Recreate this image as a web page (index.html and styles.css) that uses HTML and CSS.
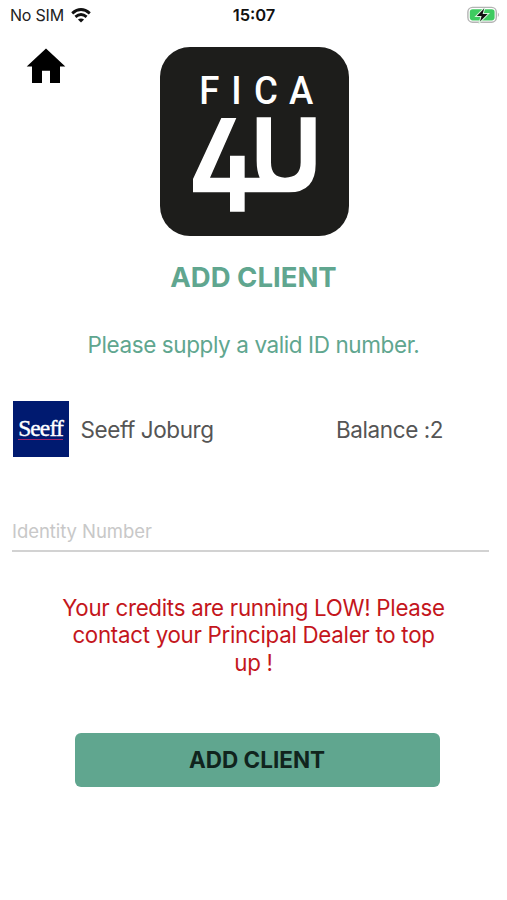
FILE: index.html
```html
<!DOCTYPE html>
<html lang="en">
<head>
<meta charset="utf-8">
<title>Add client</title>
<link rel="stylesheet" href="styles.css">
</head>
<body>
<div class="status">
  <div class="carrier"><span class="sim">No SIM</span>
    <svg class="wifi" viewBox="0 0 20 15" fill="none" stroke="#111" stroke-width="2.9"><path d="M1.2 5.4Q10 -2.2 18.8 5.4"/><path d="M4.4 8.9Q10 4.2 15.6 8.9"/><path d="M10 14.6L6.9 11.6Q10 9.2 13.1 11.6Z" fill="#111" stroke="none"/></svg>
  </div>
  <span class="time">15:07</span>
  <svg class="battery" viewBox="0 0 33 18"><rect x=".9" y="1.4" width="28.4" height="14.8" rx="4.6" fill="#fff" stroke="#b4b4b4" stroke-width="1.4"/><rect x="2.8" y="3.2" width="24.8" height="11.2" rx="2.8" fill="#3ecb60"/><path d="M30.9 6.5q2 2.2 0 4.6z" fill="#b4b4b4"/><path d="M17.2 2.4L9.8 9.9h4.8l-1.6 5.7L20.6 8h-5z" fill="#111" stroke="#d9f6df" stroke-width="2" paint-order="stroke"/></svg>
</div>
<header class="top">
  <svg class="home" viewBox="0 0 40 36"><path d="M20 .5L39.3 18.5H34V35H24V22.8H16V35H6V18.5H.7Z"/></svg>
  <svg class="logo" viewBox="28 19 567 567">
    <rect x="28" y="19" width="567" height="567" rx="90" fill="#1d1d1b"/>
    <text class="brand" transform="scale(.93 1)" x="157 260 333 446" y="189">FICA</text>
    <g fill="#fff">
      <path d="M212 232H257L178 411H238V345H282V411H327Q318 390 318 360V230H361V365Q361 411 403 411Q450 411 450 365V230H495V370Q495 455 415 455H282V513H238V455H127V415Z"/>
    </g>
  </svg>
</header>
<main>
  <h1>ADD CLIENT</h1>
  <p class="hint">Please supply a valid ID number.</p>
  <section class="account">
    <div class="seeff"><span>Seeff</span></div>
    <span class="name">Seeff Joburg</span>
    <span class="balance">Balance :2</span>
  </section>
  <input class="identity" type="text" placeholder="Identity Number">
  <p class="warning">Your credits are running LOW! Please<br>contact your Principal Dealer to top<br>up !</p>
  <button class="submit">ADD CLIENT</button>
</main>
</body>
</html>
```
FILE: styles.css
```css
* { box-sizing: border-box; }
body { margin: 0; width: 507px; height: 900px; background: #fff; font-family: Inter, "Liberation Sans", sans-serif; overflow: hidden; }
.status { height: 30px; display: grid; grid-template-columns: 1fr auto 1fr; align-items: center; padding: 0 7px 0 10px; color: #222; }
.carrier { display: flex; align-items: center; gap: 7px; font-size: 16px; }
.sim { letter-spacing: -.2px; }
.wifi { width: 20px; height: 15px; }
.time { margin-left: -2px; font-size: 16.5px; font-weight: 600; color: #111; }
.battery { width: 33px; height: 18px; justify-self: end; }
.top { height: 206px; padding: 16.5px 0 0 26px; display: flex; align-items: flex-start; }
.home { width: 40px; height: 36px; margin-top: 1.5px; }
.logo { width: 189px; height: 189px; margin-left: 93.5px; }
.brand { font: 500 118px Roboto, sans-serif; fill: #fff; }
h1 { margin: 23px 0 0; text-align: center; font-size: 27.5px; line-height: 36px; font-weight: 700; color: #60a68f; }
.hint { margin: 35px 0 0; text-align: center; font-size: 22.5px; line-height: 30px; letter-spacing: -.41px; color: #60a68f; }
.account { margin-top: 41px; height: 56px; padding-left: 12.5px; display: flex; align-items: center; font-size: 22.5px; letter-spacing: -.41px; color: #555; }
.seeff { width: 56px; height: 56px; background: #001a70; color: #fff; display: flex; align-items: center; justify-content: center; font: 400 23.5px "Liberation Serif", serif; -webkit-text-stroke: .4px #fff; }
.seeff span { line-height: 19px; height: 21px; border-bottom: 1px solid #a1266c; letter-spacing: -.9px; }
.name { margin-left: 12px; width: 255.5px; }
.identity { display: block; width: 477px; height: 42px; margin: 53px 0 0 12px; padding: 2px 0 0; border: 0; border-bottom: 2px solid #d2d2d2; background: none; font: 18.5px Inter, sans-serif; letter-spacing: -.06px; }
.identity::placeholder { color: #c8c8c8; opacity: 1; }
.warning { margin: 42px 0 0; text-align: center; font-size: 22.3px; line-height: 27.3px; letter-spacing: -.28px; color: #c4161c; }
.submit { display: block; width: 365px; height: 54px; margin: 57px 0 0 75px; padding: 0 1px 0 0; border: 0; border-radius: 6px; background: #60a68f; color: #10241d; font: 700 22.5px Inter, sans-serif; }
```
